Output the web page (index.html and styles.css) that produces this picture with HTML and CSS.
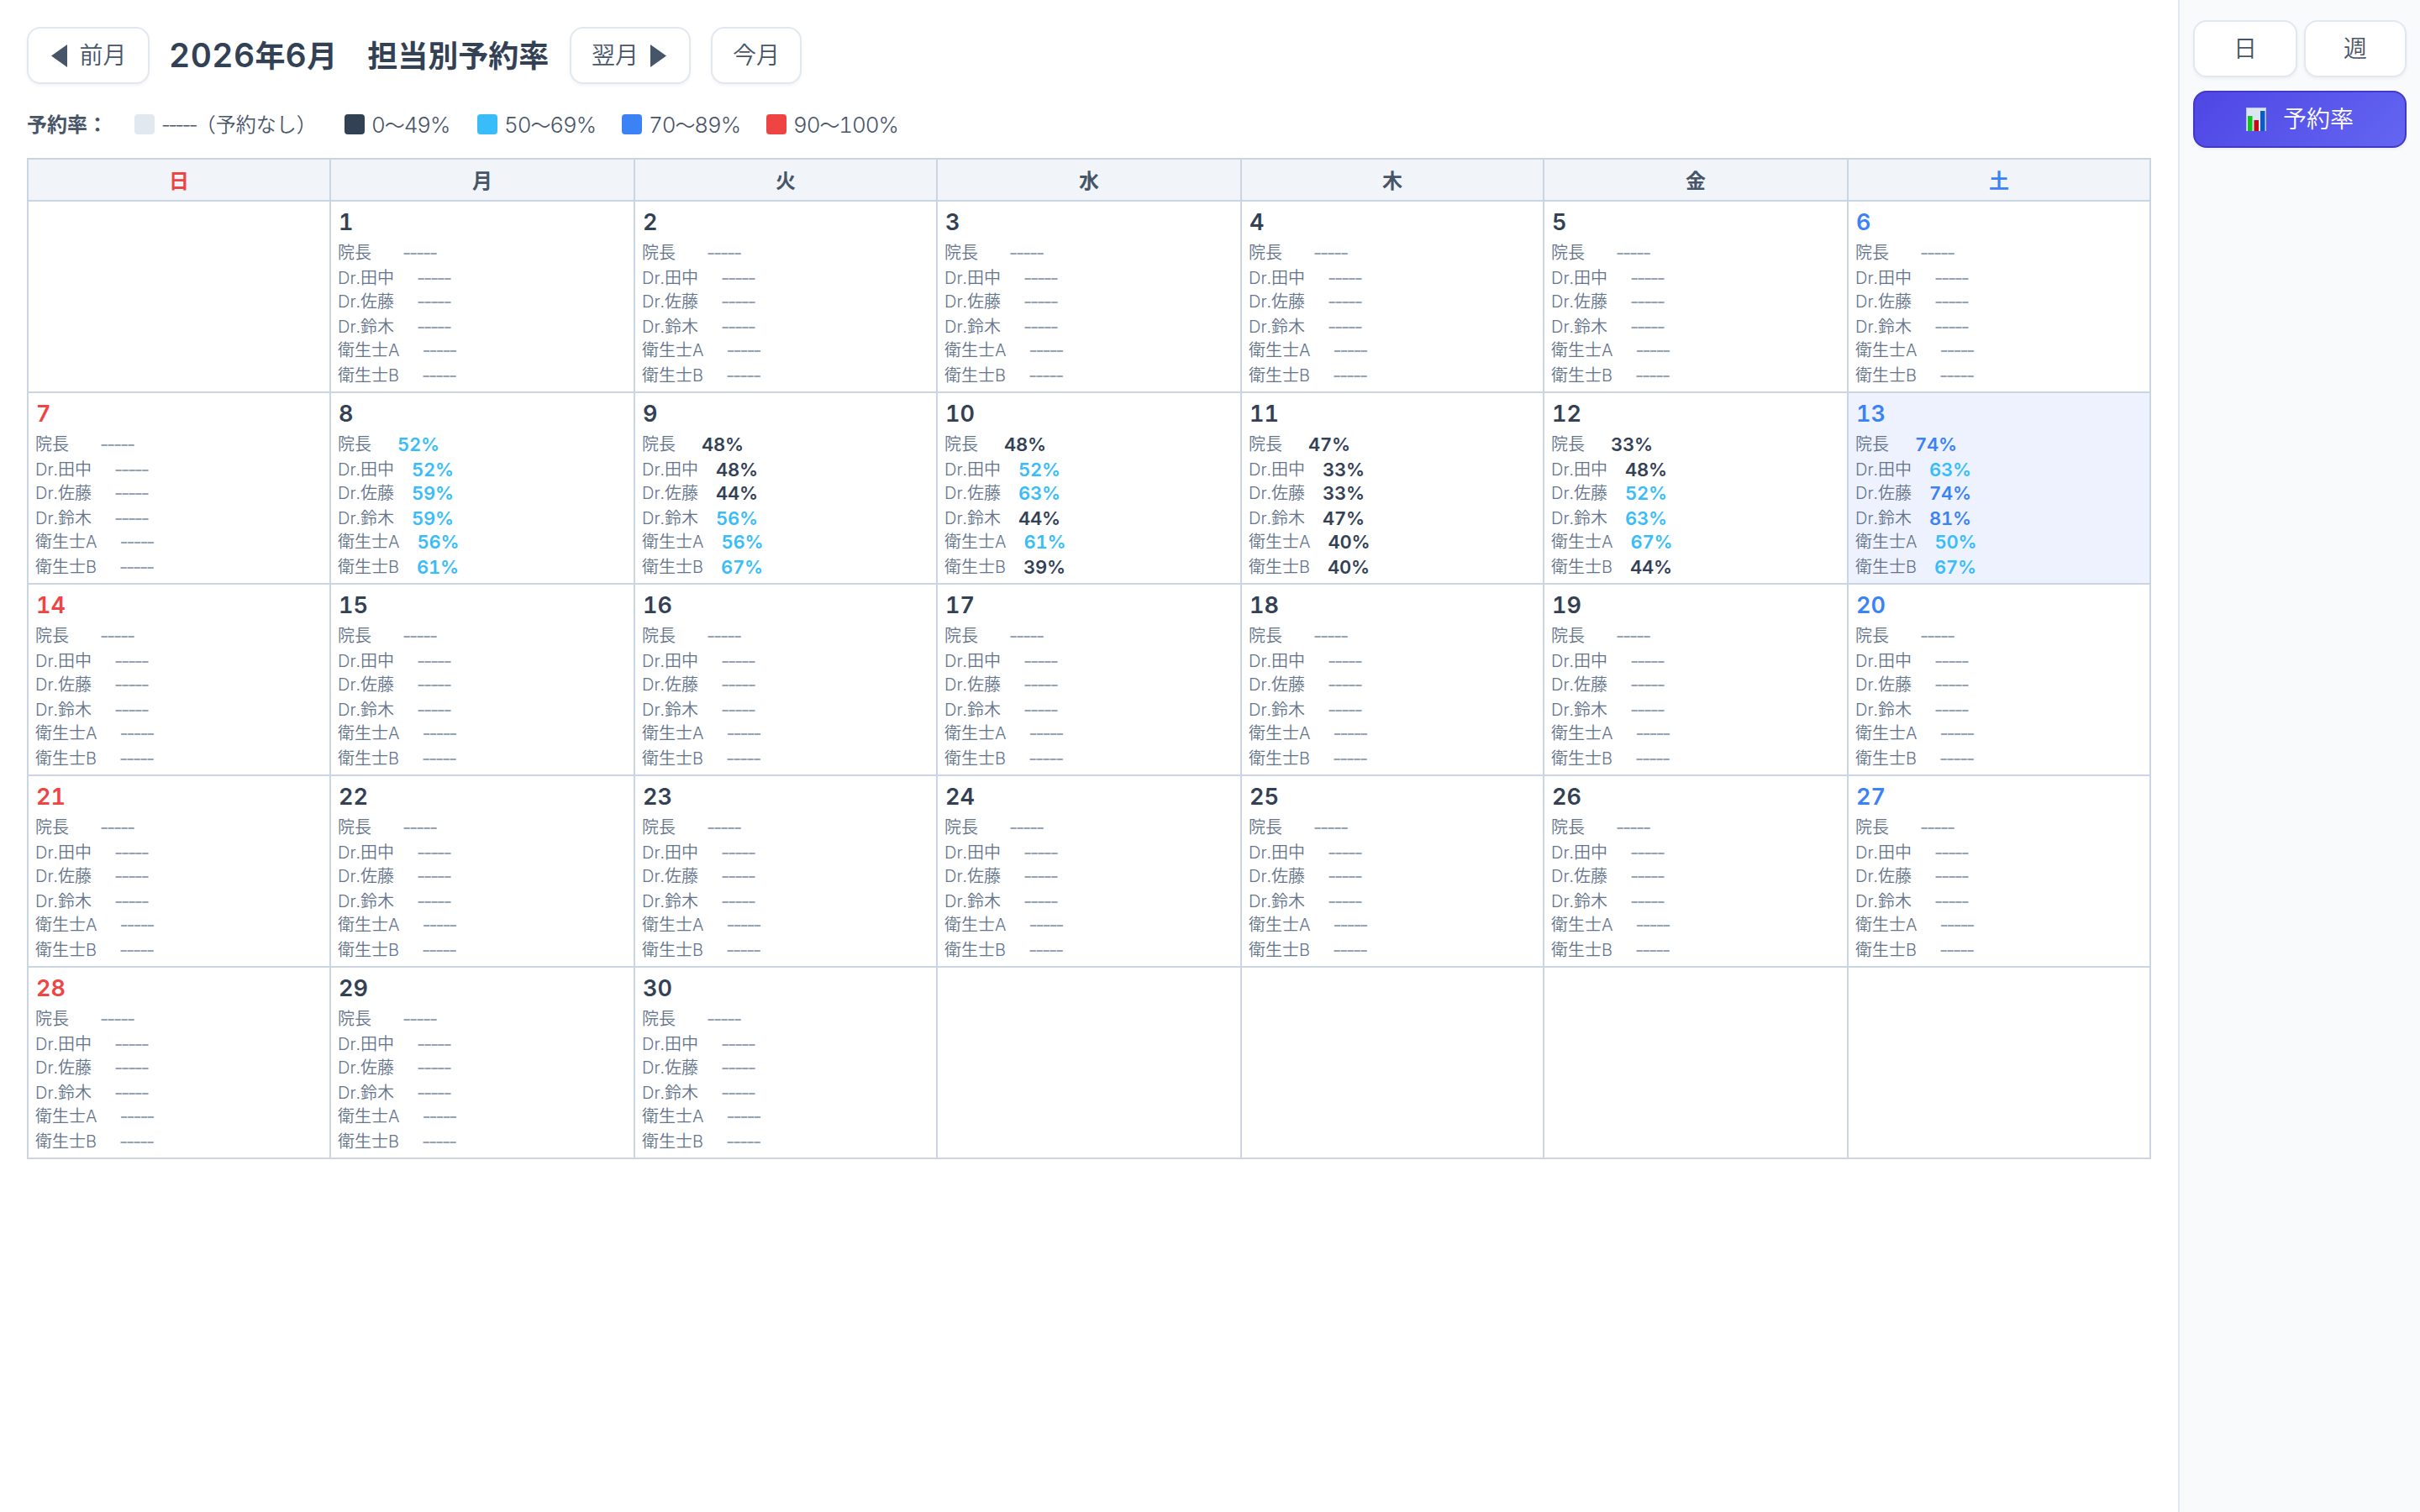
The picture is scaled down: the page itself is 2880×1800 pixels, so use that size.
FILE: index.html
```html
<!DOCTYPE html>
<html lang="ja">
<head>
    <meta charset="UTF-8">
    <meta name="viewport" content="width=device-width, initial-scale=1.0">
    <title>担当別予約率</title>
    <link rel="stylesheet" href="styles.css">
</head>
<body>
    <main class="main">
        <div class="toolbar">
            <button class="btn btn-prev">
                <svg class="arrow" viewBox="0 0 19 27"><path d="M19 0v27L0 13.5z"/></svg>
                <span>前月</span>
            </button>
            <h1><span class="num">2026</span>年<span class="num">6</span>月　担当別予約率</h1>
            <button class="btn btn-next">
                <span>翌月</span>
                <svg class="arrow" viewBox="0 0 19 27"><path d="M0 0v27l19-13.5z"/></svg>
            </button>
            <button class="btn btn-today">今月</button>
        </div>

        <div class="legend">
            <strong>予約率：</strong>
            <span class="legend-item none"><i class="swatch"></i><span class="dash">-----</span>（予約なし）</span>
            <span class="legend-item low"><i class="swatch"></i><span class="num">0<b>〜</b>49%</span></span>
            <span class="legend-item mid"><i class="swatch"></i><span class="num">50<b>〜</b>69%</span></span>
            <span class="legend-item high"><i class="swatch"></i><span class="num">70<b>〜</b>89%</span></span>
            <span class="legend-item full"><i class="swatch"></i><span class="num">90<b>〜</b>100%</span></span>
        </div>

        <table class="calendar">
            <thead>
                <tr>
                    <th class="sun">日</th>
                    <th>月</th>
                    <th>火</th>
                    <th>水</th>
                    <th>木</th>
                    <th>金</th>
                    <th class="sat">土</th>
                </tr>
            </thead>
            <tbody id="calendarBody"></tbody>
        </table>
    </main>

    <aside class="sidebar">
        <div class="view-buttons">
            <button class="btn btn-day">日</button>
            <button class="btn btn-week">週</button>
        </div>
        <button class="btn btn-rate">
            <svg class="chart-icon" viewBox="0 0 24 28">
                <rect width="24" height="28" fill="#dbe6f2"/>
                <path d="M.5 28V.5h23V28" fill="none" stroke="#b4c3e0"/>
                <rect x="2" y="10" width="5.5" height="18" fill="#0fc41c"/>
                <rect x="9.5" y="15" width="5.5" height="13" fill="#c40a12"/>
                <rect x="17" y="4" width="5.5" height="24" fill="#0a5bc4"/>
            </svg>
            <span>予約率</span>
        </button>
    </aside>

    <script>
        const staff = ['院長', 'Dr.田中', 'Dr.佐藤', 'Dr.鈴木', '衛生士A', '衛生士B'];
        const today = 13;
        const firstDay = 1; // 2026年6月1日は月曜日
        const lastDate = 30;

        // 日付ごとの予約率（担当順）
        const rates = {
            8: [52, 52, 59, 59, 56, 61],
            9: [48, 48, 44, 56, 56, 67],
            10: [48, 52, 63, 44, 61, 39],
            11: [47, 33, 33, 47, 40, 40],
            12: [33, 48, 52, 63, 67, 44],
            13: [74, 63, 74, 81, 50, 67]
        };

        function rateClass(rate) {
            if (rate === undefined) return 'none';
            if (rate < 50) return 'low';
            if (rate < 70) return 'mid';
            if (rate < 90) return 'high';
            return 'full';
        }

        function renderDay(date, weekday) {
            if (date < 1 || date > lastDate) return '<td></td>';
            const classes = [];
            if (weekday === 0) classes.push('sun');
            if (weekday === 6) classes.push('sat');
            if (date === today) classes.push('today');

            const rows = staff.map((name, i) => {
                const rate = rates[date] ? rates[date][i] : undefined;
                const text = rate === undefined ? '-----' : rate + '%';
                return `<div class="row"><span class="name">${name}</span><span class="rate ${rateClass(rate)}">${text}</span></div>`;
            }).join('');
            return `<td class="${classes.join(' ')}"><div class="date">${date}</div>${rows}</td>`;
        }

        let html = '';
        for (let start = 1 - firstDay; start <= lastDate; start += 7) {
            html += '<tr>';
            for (let w = 0; w < 7; w++) {
                html += renderDay(start + w, w);
            }
            html += '</tr>';
        }
        document.getElementById('calendarBody').innerHTML = html;
    </script>
</body>
</html>
```
FILE: styles.css
```css
* {
    box-sizing: border-box;
}
body {
    margin: 0;
    min-height: 100vh;
    display: flex;
    font-family: Inter, "Noto Sans CJK JP", sans-serif;
    font-variant-numeric: tabular-nums;
    color: #334155;
    background: #fff;
}
.main {
    flex: 1;
    padding: 32px;
}
.toolbar {
    display: flex;
    align-items: center;
    gap: 24px;
    height: 68px;
}
.toolbar h1 {
    width: 452px;
    margin: 0;
    padding-top: 1px;
    font-size: 36px;
    font-weight: 600;
    line-height: 68px;
    text-indent: -1px;
    white-space: nowrap;
}
.toolbar h1 .num {
    font-size: 39px;
    letter-spacing: 0.4px;
}
.btn {
    display: flex;
    align-items: center;
    justify-content: center;
    height: 68px;
    padding: 0;
    border: 2px solid #e2e8f0;
    border-radius: 16px;
    background: #fff;
    color: #475569;
    font-family: inherit;
    font-size: 28px;
    font-weight: 350;
    line-height: 40px;
    box-shadow: 0 2px 4px rgba(0, 0, 0, 0.05);
}
.btn-prev {
    width: 146px;
    gap: 14px;
    padding-left: 2px;
}
.btn-next {
    width: 144px;
    gap: 14px;
    padding-right: 3px;
}
.btn-today {
    width: 108px;
}
.arrow {
    width: 19px;
    height: 27px;
    fill: #475569;
}
.legend {
    display: flex;
    align-items: center;
    gap: 32px;
    height: 40px;
    margin: 29px 0 19px;
    color: #475569;
    font-size: 24px;
    font-weight: 350;
    line-height: 40px;
    white-space: nowrap;
}
.legend strong {
    width: 96px;
    font-weight: 600;
}
.legend-item {
    display: flex;
    align-items: center;
}
.legend-item.none {
    width: 218px;
}
.legend-item.low {
    width: 126px;
}
.legend-item.mid,
.legend-item.high {
    width: 140px;
}
.legend-item .num {
    font-size: 26px;
    letter-spacing: -1.1px;
}
.legend-item .dash {
    font-variant-numeric: normal;
    letter-spacing: -2.7px;
}
.legend-item b {
    font-size: 24px;
    font-weight: 350;
}
.swatch {
    flex-shrink: 0;
    width: 24px;
    height: 24px;
    margin: -2px 8px 0 0;
    border-radius: 4px;
}
.none .swatch {
    background: #e2e8f0;
}
.low .swatch {
    background: #334155;
}
.mid .swatch {
    background: #38bdf8;
}
.high .swatch {
    background: #3b82f6;
}
.full .swatch {
    background: #ef4444;
}
.calendar {
    width: 2528px;
    table-layout: fixed;
    border-collapse: separate;
    border-spacing: 0;
    border-right: 2px solid #cbd5e1;
    border-bottom: 2px solid #cbd5e1;
}
.calendar th,
.calendar td {
    width: 360px;
    border-left: 2px solid #cbd5e1;
    border-top: 2px solid #cbd5e1;
}
.calendar th:nth-child(even) {
    width: 362px;
}
.calendar th {
    height: 50px;
    padding: 3px 0 0;
    background: #f1f5f9;
    color: #475569;
    font-size: 24px;
    font-weight: 600;
    line-height: 45px;
}
.calendar td {
    height: 228px;
    padding: 8px 8px 0;
    vertical-align: top;
}
.calendar td.today {
    background: #eef2ff;
}
.date {
    height: 34px;
    margin-bottom: 4px;
    padding-left: 1px;
    font-size: 27px;
    font-weight: 600;
    line-height: 34px;
}
.calendar th.sun,
.sun .date {
    color: #ef4444;
}
.calendar th.sat,
.sat .date {
    color: #3b82f6;
}
.row {
    display: flex;
    height: 28px;
    line-height: 30px;
    white-space: nowrap;
}
/* 行の高さは30pxと28pxを交互に */
.row:nth-child(even) {
    height: 30px;
}
.name {
    min-width: 50px;
    margin-right: 21px;
    color: #64748b;
    font-size: 20px;
    font-weight: 350;
}
.rate {
    font-size: 22px;
    font-weight: 600;
    letter-spacing: -0.2px;
}
.rate.none {
    margin-left: 6px;
    color: #94a3b8;
    font-variant-numeric: normal;
    font-weight: 500;
    letter-spacing: -2.2px;
}
.rate.low {
    color: #334155;
}
.rate.mid {
    color: #38bdf8;
}
.rate.high {
    color: #3b82f6;
}
.rate.full {
    color: #ef4444;
}
.sidebar {
    width: 288px;
    padding: 24px 16px;
    border-left: 2px solid #e2e8f0;
    background: #f8fafc;
}
.view-buttons {
    display: flex;
    gap: 8px;
    margin-bottom: 16px;
}
.btn-day {
    width: 124px;
}
.btn-week {
    width: 122px;
}
.btn-rate {
    width: 254px;
    gap: 20px;
    border-color: #4338ca;
    background: linear-gradient(135deg, #4f46e5, #6366f1);
    color: #fff;
}
.chart-icon {
    width: 24px;
    height: 28px;
}
```
